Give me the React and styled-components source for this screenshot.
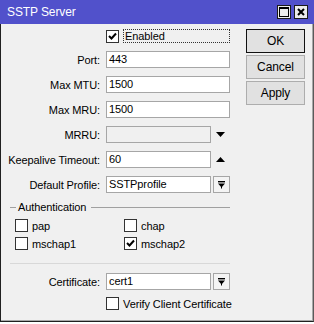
import React from 'react';
import styled, { createGlobalStyle } from 'styled-components';

const GlobalStyle = createGlobalStyle`
  html, body {
    margin: 0;
    padding: 0;
    background: #ffffff;
  }
  body {
    font-family: "Liberation Sans", Arial, sans-serif;
    font-size: 11px;
    letter-spacing: -0.1px;
    color: #000;
  }
`;

const Window = styled.div`
  width: 314px;
  height: 322px;
  box-sizing: border-box;
  display: flex;
  flex-direction: column;
  background: #f0f0f0;
  border-left: 1px solid #202020;
  border-right: 1px solid #5a5a5a;
  border-bottom: 1px solid #202020;
`;

const TitleBar = styled.div`
  height: 24px;
  flex: none;
  display: flex;
  align-items: center;
  justify-content: space-between;
  background: #5151cb;
  margin-left: -1px;
  margin-right: -1px;
  padding: 0 6px 0 7px;
`;

const Title = styled.span`
  color: #fff;
  font-size: 12px;
`;

const TitleButtons = styled.div`
  display: flex;
  gap: 3px;
`;

const TitleButton = styled.div`
  width: 12px;
  height: 12px;
  border: 1px solid #1a1a1a;
  background: #ececec;
  display: flex;
  align-items: center;
  justify-content: center;
`;

const Body = styled.div`
  flex: 1;
  display: flex;
  border-right: 1px solid #a8a8a8;
  border-bottom: 1px solid #a8a8a8;
`;

const Form = styled.div`
  width: 229px;
  flex: none;
  padding-top: 5px;
  display: flex;
  flex-direction: column;
`;

const EnabledRow = styled.div`
  display: flex;
  align-items: center;
  height: 14px;
  padding-left: 105px;
  margin-bottom: 8px;
`;

const FocusLabel = styled.span`
  margin-left: 4px;
  flex: 1;
  height: 12px;
  line-height: 12px;
  padding-left: 1px;
  border: 1px dotted #333;
`;

const Fields = styled.div`
  display: flex;
  flex-direction: column;
  gap: 8px;
`;

const FieldRow = styled.div`
  display: flex;
  align-items: center;
  height: 17px;
  margin-top: ${p => p.$top || 0}px;
`;

const Label = styled.span`
  width: 99px;
  padding-right: 6px;
  text-align: right;
  white-space: nowrap;
  flex: none;
`;

const Input = styled.div`
  width: ${p => p.$w}px;
  height: 17px;
  box-sizing: border-box;
  border: 1px solid #a6a6a6;
  background: ${p => (p.$disabled ? '#f0f0f0' : '#fff')};
  padding-left: 2px;
  line-height: 15px;
  flex: none;
`;

const DropButton = styled.div`
  width: 17px;
  height: 17px;
  box-sizing: border-box;
  margin-left: 2px;
  border: 1px solid #a6a6a6;
  background: #f4f4f4;
  display: flex;
  align-items: center;
  justify-content: center;
`;

const Arrow = styled.div`
  width: 19px;
  display: flex;
  align-items: center;
  justify-content: center;
`;

const GroupHeader = styled.div`
  display: flex;
  align-items: center;
  height: 14px;
  margin-top: 7px;
  padding-left: 9px;
  gap: 2px;
`;

const GroupLine = styled.div`
  height: 1px;
  background: #a0a0a0;
  width: ${p => (p.$w ? `${p.$w}px` : 'auto')};
  flex: ${p => (p.$w ? 'none' : 1)};
  margin-left: ${p => (p.$w ? 0 : 3)}px;
`;

const CheckGrid = styled.div`
  display: grid;
  grid-template-columns: 109px 1fr;
  row-gap: 5px;
  padding-left: 14px;
  margin-top: 5px;
`;

const CheckItem = styled.div`
  display: flex;
  align-items: center;
  height: 13px;
  gap: 4px;
  white-space: nowrap;
  padding-left: ${p => p.$indent || 0}px;
  margin-top: ${p => p.$top || 0}px;
`;

const Box = styled.div`
  width: 13px;
  height: 13px;
  box-sizing: border-box;
  border: 1px solid #333;
  background: #fff;
  flex: none;
  display: flex;
  align-items: center;
  justify-content: center;
`;

const Separator = styled.div`
  height: 1px;
  background: #d8d8d8;
  margin: 13px 0 0 9px;
`;

const ButtonColumn = styled.div`
  margin-left: 16px;
  padding-top: 5px;
  display: flex;
  flex-direction: column;
  gap: 2px;
`;

const Button = styled.div`
  width: 59px;
  height: 24px;
  box-sizing: border-box;
  border: 1px solid ${p => (p.$default ? '#111' : '#adadad')};
  background: #e1e1e1;
  display: flex;
  align-items: center;
  justify-content: center;
  font-size: 12px;
`;

const Check = ({ checked }) => (
  <Box>
    {checked && (
      <svg width="9" height="9" viewBox="0 0 9 9">
        <path d="M1 4 L3.5 6.5 L8 1.5" stroke="#000" strokeWidth="2" fill="none" />
      </svg>
    )}
  </Box>
);

const DropIcon = () => (
  <svg width="9" height="9" viewBox="0 0 9 9">
    <rect x="1" y="1" width="7" height="1.4" fill="#000" />
    <path d="M1 3.5 H8 L4.5 7.5 Z" fill="#000" />
    <rect x="4" y="7" width="1" height="1.5" fill="#000" />
  </svg>
);

const Triangle = ({ up }) => (
  <svg width="9" height="5" viewBox="0 0 9 5">
    <path d={up ? 'M0 5 H9 L4.5 0 Z' : 'M0 0 H9 L4.5 5 Z'} fill="#000" />
  </svg>
);

const fields = [
  { label: 'Port:', value: '443', w: 124 },
  { label: 'Max MTU:', value: '1500', w: 124 },
  { label: 'Max MRU:', value: '1500', w: 124 },
  { label: 'MRRU:', value: '', w: 105, disabled: true, arrow: 'down' },
  { label: 'Keepalive Timeout:', value: '60', w: 105, arrow: 'up' },
  { label: 'Default Profile:', value: 'SSTPprofile', w: 105, drop: true },
];

const auth = [
  { name: 'pap', checked: false },
  { name: 'chap', checked: false },
  { name: 'mschap1', checked: false },
  { name: 'mschap2', checked: true },
];

export default function App() {
  return (
    <>
      <GlobalStyle />
      <Window>
        <TitleBar>
          <Title>SSTP Server</Title>
          <TitleButtons>
            <TitleButton>
              <svg width="10" height="10" viewBox="0 0 10 10">
                <rect x="0.5" y="0.5" width="9" height="9" fill="none" stroke="#000" />
                <rect x="0.5" y="0.5" width="9" height="1.5" fill="#000" />
              </svg>
            </TitleButton>
            <TitleButton>
              <svg width="8" height="8" viewBox="0 0 8 8">
                <path d="M1 1 L7 7 M7 1 L1 7" stroke="#000" strokeWidth="2" />
              </svg>
            </TitleButton>
          </TitleButtons>
        </TitleBar>
        <Body>
          <Form>
            <EnabledRow>
              <Check checked />
              <FocusLabel>Enabled</FocusLabel>
            </EnabledRow>
            <Fields>
              {fields.map(f => (
                <FieldRow key={f.label}>
                  <Label>{f.label}</Label>
                  <Input $w={f.w} $disabled={f.disabled}>{f.value}</Input>
                  {f.drop && (
                    <DropButton>
                      <DropIcon />
                    </DropButton>
                  )}
                  {f.arrow && (
                    <Arrow>
                      <Triangle up={f.arrow === 'up'} />
                    </Arrow>
                  )}
                </FieldRow>
              ))}
            </Fields>
            <GroupHeader>
              <GroupLine $w={6} />
              <span>Authentication</span>
              <GroupLine />
            </GroupHeader>
            <CheckGrid>
              {auth.map(a => (
                <CheckItem key={a.name}>
                  <Check checked={a.checked} />
                  <span>{a.name}</span>
                </CheckItem>
              ))}
            </CheckGrid>
            <Separator />
            <FieldRow $top={9}>
              <Label>Certificate:</Label>
              <Input $w={105}>cert1</Input>
              <DropButton>
                <DropIcon />
              </DropButton>
            </FieldRow>
            <CheckItem $indent={105} $top={7}>
              <Check />
              <span>Verify Client Certificate</span>
            </CheckItem>
          </Form>
          <ButtonColumn>
            <Button $default>OK</Button>
            <Button>Cancel</Button>
            <Button>Apply</Button>
          </ButtonColumn>
        </Body>
      </Window>
    </>
  );
}
